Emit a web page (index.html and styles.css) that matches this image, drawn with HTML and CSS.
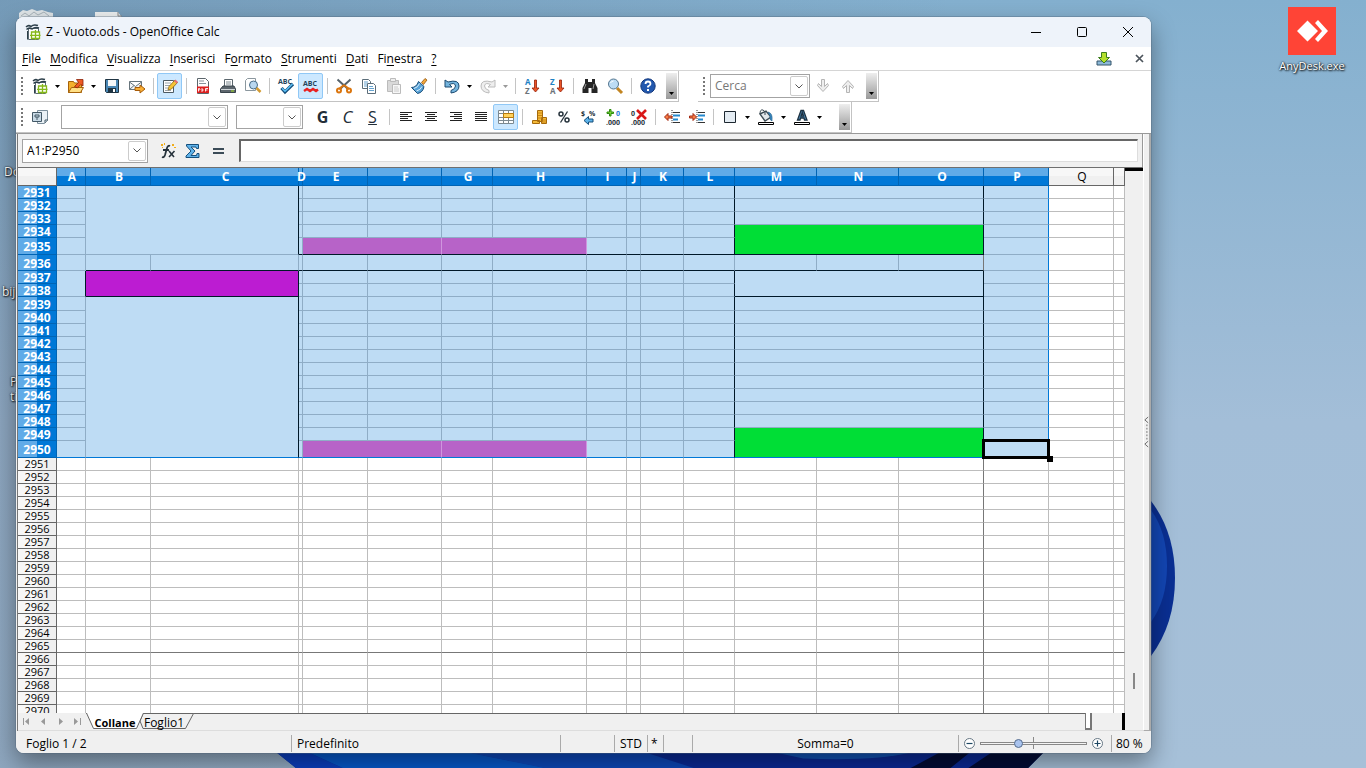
FILE: index.html
```html
<!DOCTYPE html>
<html lang="it">
<head>
<meta charset="utf-8">
<title>Z - Vuoto.ods - OpenOffice Calc</title>
<link rel="stylesheet" href="styles.css">
</head>
<body>
<svg class="defs" aria-hidden="true">
  <symbol id="calc" viewBox="0 0 16 16"><path d="M3.500 4.500h10v11h-10z" fill="#fff" stroke="#5a6a74"/><path d="M1 3q2.500-2.500 5-.5Q8.500 0 13 1.500M1.500 5.500Q4 3 7 5q3-2.500 7-1" fill="none" stroke="#2c3e49" stroke-width="1.500"/><path d="M2.500 7v8.500" stroke="#2c3e49"/><path d="M6.500 8h8v6.500h-8z" fill="#fdfff2" stroke="#86b81a" stroke-width="1.300"/><path d="M10.500 6v10M5 11.300h10.500" stroke="#86b81a" stroke-width="1.300"/></symbol>
  <symbol id="caret" viewBox="0 0 5 3"><path d="M0 0h5L2.500 3z"/></symbol>
  <symbol id="chev" viewBox="0 0 8 5"><path d="M.5.500L4 4 7.500.500" fill="none" stroke="#555"/></symbol>
</svg>
<main class="desktop">
  <svg class="bloom bloom-side" viewBox="0 0 30 160" aria-hidden="true"><path d="M0 3Q24 34 24 80T0 158z" fill="#0a2f93"/><path d="M0 12Q16 34 16 68T0 124z" fill="#1346b4"/></svg>
  <svg class="bloom bloom-base" viewBox="0 0 780 20" preserveAspectRatio="none" aria-hidden="true"><path d="M0 0h772l-16 20H20z" fill="#0a2a96"/><path d="M0 0h32l35 20H20z" fill="#0b3fc0"/><path d="M32 0h160l80 20H67z" fill="#0759cb"/><path d="M190 0h180l50 20H270z" fill="#0d48b9"/><path d="M500 0h140q-40 12-110 8z" fill="#1254b6"/><path d="M668 0h30l-20 20h-40zM720 0h52l-16 20h-60z" fill="#020c36"/></svg>
  <svg class="shortcut-top" viewBox="0 0 110 10" aria-hidden="true"><path d="M1 10V4l4-3 4 1 5-2 5 2 5-1 6 2 5 1v6z" fill="#dfe5e8"/><path d="M3 7l4-3 4 3 5-4 4 3 6-3 5 4" fill="none" stroke="#a9b4bb"/><path d="M77 10V3h23l5 7z" fill="#edf0f1"/><path d="M100 3v4h4" fill="none" stroke="#888"/></svg>
  <span class="desk-label label-a">Do</span><span class="desk-label label-b">bij</span><span class="desk-label label-c">P<br>ti</span>
  <a class="anydesk" href="#"><svg viewBox="0 0 48 48" aria-hidden="true"><path fill="#ff4436" d="M0 0h48v48H0z"/><path fill="#fff" d="M9 24l10.500-10.500L30 24 19.500 34.500zM27 16l3-3 10 11-10 11-3-3 7-8z"/></svg><span>AnyDesk.exe</span></a>

  <section class="window">
    <header class="title"><svg class="i"><use href="#calc"/></svg><h1>Z - Vuoto.ods - OpenOffice Calc</h1>
      <div class="controls">
        <button aria-label="Riduci"><svg viewBox="0 0 12 12"><path d="M1 6.500h10" stroke="#000"/></svg></button>
        <button aria-label="Ingrandisci"><svg viewBox="0 0 12 12"><rect x="1.500" y="1.500" width="9" height="9" rx="1" fill="none" stroke="#000"/></svg></button>
        <button aria-label="Chiudi"><svg viewBox="0 0 12 12"><path d="M1 1l10 10M11 1L1 11" stroke="#000"/></svg></button>
      </div>
    </header>
    <nav class="menu">
      <button><u>F</u>ile</button><button><u>M</u>odifica</button><button><u>V</u>isualizza</button><button><u>I</u>nserisci</button><button>F<u>o</u>rmato</button><button><u>S</u>trumenti</button><button><u>D</u>ati</button><button>Fi<u>n</u>estra</button><button><u>?</u></button>
      <div class="menu-end">
        <button aria-label="Aggiornamenti"><svg class="i" viewBox="0 0 16 16"><path d="M1 10h14v4H1z" fill="#8db9d8" stroke="#35556b"/><path d="M5.500 1.500h5v5h3L8 12 2.500 6.500h3z" fill="#b4e02c" stroke="#3c7d1c"/></svg></button>
        <button aria-label="Chiudi documento"><svg class="x" viewBox="0 0 9 9"><path d="M1 1l7 7M8 1L1 8" stroke="#4c545c" stroke-width="1.700"/></svg></button>
      </div>
    </nav>

    <div class="barrow">
    <div class="bar standard">
      <span class="grip"></span>
      <button class="tb" aria-label="Nuovo"><svg class="i"><use href="#calc"/></svg></button><button class="dd" aria-label="Tipi"><svg><use href="#caret"/></svg></button>
      <button class="tb" aria-label="Apri"><svg class="i" viewBox="0 0 16 16"><path d="M.5 14.500V3.500h5l1 1.500h7v9.500z" fill="#f3b02d" stroke="#a6620a"/><path d="M.5 14.500l3-5h12l-3 5z" fill="#ffdf85" stroke="#a6620a"/><path d="M6.500 8.500l4-4-2-3h6.500v6.500l-2.200-1.500-3.500 3.500z" fill="#ee5a24" stroke="#8c2208" stroke-width=".8"/></svg></button><button class="dd" aria-label="Recenti"><svg><use href="#caret"/></svg></button>
      <button class="tb" aria-label="Salva"><svg class="i" viewBox="0 0 16 16"><path d="M1.500 1.500h13v13h-12l-1-1z" fill="#4a87b5" stroke="#1f3442"/><path d="M4 2h8v6H4z" fill="#f6f8f9"/><path d="M4 10h8v4H4z" fill="#1f3442"/><path d="M9 11h2v3H9z" fill="#fff"/></svg></button>
      <button class="tb" aria-label="Documento come e-mail"><svg class="i" viewBox="0 0 16 16"><path d="M.5 3.500h12v8H.5zM.5 4l6 4.500L12.500 4M.5 11.500L5 7.500" fill="#f4f6f7" stroke="#67747c"/><path d="M6 9.500h5V7l5 4-5 4v-2.500H6z" fill="#f9af36" stroke="#a85c08"/></svg></button>
      <span class="sep"></span>
      <button class="tb on" aria-label="Modifica file"><svg class="i" viewBox="0 0 16 16"><path d="M1.500 2.500h10v12h-10z" fill="#fff" stroke="#4d5b64"/><path d="M3 5h6M3 7.500h5M3 10h3M3 12.500h6" stroke="#9aa4ab"/><path d="M6 12l1-3.500L13 2l2.500 2.500L9.500 11z" fill="#f5c436" stroke="#8a6412" stroke-width=".8"/><path d="M12 3l1.500-1.500L16 4l-1.500 1.500z" fill="#e76e74"/></svg></button>
      <span class="sep"></span>
      <button class="tb" aria-label="Esporta PDF"><svg class="i" viewBox="0 0 16 16"><path d="M2.500.500h8l3 3v12h-11z" fill="#fff" stroke="#5c666c"/><path d="M4 3h5M4 5.500h7" stroke="#87929a"/><path d="M2 8.500h12v6.500H2z" fill="#dc2020"/><path d="M3.500 13.500v-3h1q1 .8 0 1.500h-1M7 10.500v3q2.500-1.500 0-3M10.500 13.500v-3H13M10.500 12h2" fill="none" stroke="#fff" stroke-width=".9"/></svg></button>
      <button class="tb" aria-label="Stampa"><svg class="i" viewBox="0 0 16 16"><path d="M4.500 8V1.500h8V8" fill="#fff" stroke="#5b666d"/><path d="M6 4h5M6 6h5" stroke="#7c8990"/><path d="M3 8h11l1.500 3v3.500H.5V11z" fill="#5d666d" stroke="#39444c"/><path d="M1 11.500h14" stroke="#cfd5d8"/><path d="M11 13h3" stroke="#a3df22"/></svg></button>
      <button class="tb" aria-label="Anteprima"><svg class="i" viewBox="0 0 16 16"><path d="M.5 2.500l2-2h8v12H.5z" fill="#fff" stroke="#8b979e"/><circle cx="8.500" cy="7" r="4" fill="#b9d7ef" stroke="#476b85"/><path d="M11.500 10l4 4" stroke="#d39b32" stroke-width="2.500"/></svg></button>
      <span class="sep"></span>
      <button class="tb" aria-label="Ortografia"><svg class="i" viewBox="0 0 16 16"><text x="0" y="6" class="abc">ABC</text><path d="M3.500 10l3.500 4 8-8" fill="none" stroke="#164f7d" stroke-width="3.200"/><path d="M4 10.300l3 3 7.500-7.300" fill="none" stroke="#5cc0f5" stroke-width="1.500"/></svg></button>
      <button class="tb on" aria-label="Controllo automatico"><svg class="i" viewBox="0 0 16 16"><text x="0" y="8" class="abc">ABC</text><path d="M1 13l3-2 3 2 3-2 3 2 2-1.500" fill="none" stroke="#e92121" stroke-width="2.400"/></svg></button>
      <span class="sep"></span>
      <button class="tb" aria-label="Taglia"><svg class="i" viewBox="0 0 16 16"><path d="M1.500 1.500L12 11M14.500 1.500L4 11" stroke="#56636c" stroke-width="2"/><path d="M8 7L3 11M8 7l5 4" stroke="#db760f" stroke-width="2"/><circle cx="3" cy="12.500" r="2" fill="none" stroke="#db760f" stroke-width="2"/><circle cx="13" cy="12.500" r="2" fill="none" stroke="#db760f" stroke-width="2"/></svg></button>
      <button class="tb" aria-label="Copia"><svg class="i" viewBox="0 0 16 16"><path d="M1.500 1.500h6l2 2v7h-8z" fill="#fff" stroke="#5b6d79"/><path d="M3 4h4M3 6h3M3 8h3" stroke="#66a3cf"/><path d="M6.500 5.500h6l2 2v8h-8z" fill="#fff" stroke="#5b6d79"/><path d="M8 8.500h4M8 10.500h5M8 12.500h5" stroke="#66a3cf"/></svg></button>
      <button class="tb" aria-label="Incolla" disabled><svg class="i" viewBox="0 0 16 16"><path d="M1.500 2.500h11v11h-11z" fill="#d9d9d9" stroke="#bbb"/><path d="M4.500.500h5v3h-5z" fill="#eee" stroke="#bbb"/><path d="M6.500 6.500h8v9h-8z" fill="#f7f7f7" stroke="#bbb"/><path d="M8 9h4M8 11h5M8 13h5" stroke="#ccc"/></svg></button>
      <button class="tb" aria-label="Pennello formato"><svg class="i" viewBox="0 0 16 16"><path d="M10.500 4.500L14 .5 16 2l-3.500 4.500z" fill="#f3a83b" stroke="#94570e" stroke-width=".8"/><path d="M7.500 3.500l5.500 5q-1 6-6.500 7L.5 9.500q5 0 7-6z" fill="#59a3d8" stroke="#184e79"/><path d="M3 10.500q4-1 5.500-5M5.500 13q4-1 5.500-4.500" stroke="#d9effd" fill="none"/></svg></button>
      <span class="sep"></span>
      <button class="tb" aria-label="Annulla"><svg class="i" viewBox="0 0 16 16"><path d="M1 2v7h7L5.500 6.500Q11 4 11.500 8 11.500 11 7 12.500V15q8-1 8-7 0-7-11-4z" fill="#75b5de" stroke="#1c4a70"/></svg></button><button class="dd" aria-label="Elenco annulla"><svg><use href="#caret"/></svg></button>
      <button class="tb" aria-label="Ripristina" disabled><svg class="i" viewBox="0 0 16 16"><path d="M15 2v7H8l2.500-2.500Q5 4 4.500 8 4.500 11 9 12.500V15Q1 14 1 8q0-7 11-4z" fill="#eee" stroke="#bcbcbc"/></svg></button><button class="dd off" aria-label="Elenco ripristina" disabled><svg><use href="#caret"/></svg></button>
      <span class="sep"></span>
      <button class="tb" aria-label="Ordine crescente"><svg class="i" viewBox="0 0 16 16"><text x="1" y="7" class="az b">A</text><text x="1" y="16" class="az">Z</text><path d="M10.500 2h2v8H15l-3.500 4L8 10h2.500z" fill="#eb5526" stroke="#941f09" stroke-width=".8"/></svg></button>
      <button class="tb" aria-label="Ordine decrescente"><svg class="i" viewBox="0 0 16 16"><text x="1" y="7" class="az b">Z</text><text x="1" y="16" class="az">A</text><path d="M10.500 2h2v8H15l-3.500 4L8 10h2.500z" fill="#eb5526" stroke="#941f09" stroke-width=".8"/></svg></button>
      <span class="sep"></span>
      <button class="tb" aria-label="Trova e sostituisci"><svg class="i" viewBox="0 0 16 16"><path d="M3 1h3v3h4V1h3v4l2.500 5v5h-6v-5h-3v5h-6v-5L3 5z" fill="#252525"/><path d="M4 6l-2 5M12 6l-1 5" stroke="#999"/></svg></button>
      <button class="tb" aria-label="Zoom"><svg class="i" viewBox="0 0 16 16"><path d="M10 10l5 5" stroke="#c28521" stroke-width="3"/><circle cx="6.500" cy="6" r="5" fill="#bcdcf5" stroke="#53758e"/><path d="M3.500 5q1-2 3-2" stroke="#fff" fill="none"/></svg></button>
      <span class="sep"></span>
      <button class="tb" aria-label="Guida"><svg class="i" viewBox="0 0 16 16"><circle cx="8" cy="8" r="7.200" fill="#2258ae" stroke="#12377c"/><path d="M5.500 6q0-2.500 2.500-2.500T10.500 6Q10.500 7 8 8.500v1" fill="none" stroke="#fff" stroke-width="1.800"/><path d="M7 11h2v2H7z" fill="#fff"/></svg></button>
      <button class="more" aria-label="Altro"><svg><use href="#caret"/></svg></button>
    </div>
    <div class="bar search">
      <span class="grip"></span>
      <label class="combo w-find"><input placeholder="Cerca" aria-label="Cerca"><span class="arrow"><svg><use href="#chev"/></svg></span></label>
      <button class="tb" aria-label="Successivo" disabled><svg class="i" viewBox="0 0 16 16"><path d="M6.500 1.500h3v7l3-3 1 2L8 13.500 2.500 7.500l1-2 3 3z" fill="#eee" stroke="#b5b5b5"/></svg></button>
      <button class="tb" aria-label="Precedente" disabled><svg class="i" viewBox="0 0 16 16"><path d="M6.500 14.500h3v-7l3 3 1-2L8 2.500 2.500 8.500l1 2 3-3z" fill="#eee" stroke="#b5b5b5"/></svg></button>
      <button class="more" aria-label="Altro"><svg><use href="#caret"/></svg></button>
    </div>
    </div>

    <div class="barrow">
    <div class="bar format">
      <span class="grip"></span>
      <button class="tb" aria-label="Stili"><svg class="i" viewBox="0 0 16 16"><path d="M5.500 1.500h10v10l-3 3h-7z" fill="#eaf1f6" stroke="#7c8f9c"/><path d="M.5 3.500h9v9h-9z" fill="#c9dae6" stroke="#435866"/><path d="M3 6h4v2H3zM5 8v3M13 14v-3h3" fill="none" stroke="#435866"/></svg></button>
      <label class="combo w-font"><input aria-label="Nome carattere"><span class="arrow"><svg><use href="#chev"/></svg></span></label>
      <label class="combo w-size"><input aria-label="Dimensione carattere"><span class="arrow"><svg><use href="#chev"/></svg></span></label>
      <button class="tb txt"><b>G</b></button><button class="tb txt"><i>C</i></button><button class="tb txt"><u>S</u></button>
      <span class="sep"></span>
      <button class="tb" aria-label="Sinistra"><svg class="i" viewBox="0 0 16 16"><path d="M2 3.500h12M2 5.500h8M2 7.500h12M2 9.500h8M2 11.500h12" stroke="#222"/></svg></button>
      <button class="tb" aria-label="Centrato"><svg class="i" viewBox="0 0 16 16"><path d="M2 3.500h12M4 5.500h8M2 7.500h12M4 9.500h8M2 11.500h12" stroke="#222"/></svg></button>
      <button class="tb" aria-label="Destra"><svg class="i" viewBox="0 0 16 16"><path d="M2 3.500h12M6 5.500h8M2 7.500h12M6 9.500h8M2 11.500h12" stroke="#222"/></svg></button>
      <button class="tb" aria-label="Giustificato"><svg class="i" viewBox="0 0 16 16"><path d="M2 3.500h12M2 5.500h12M2 7.500h12M2 9.500h12M2 11.500h12" stroke="#222"/></svg></button>
      <button class="tb on" aria-label="Unisci celle"><svg class="i" viewBox="0 0 16 16"><path d="M.5 1.500h15v13H.5zM.5 4.500h15M.5 8.500h15M.5 11.500h15M5.500 1.500v13M10.500 1.500v13" fill="#fff" stroke="#7c8990"/><path d="M5.500 4.500h10v4h-10z" fill="#ffd25c" stroke="#b97a0d"/></svg></button>
      <span class="sep"></span>
      <button class="tb" aria-label="Valuta"><svg class="i" viewBox="0 0 16 16"><path d="M6.500 1.500h5v11h-5zM10.500 8.500h5v6h-5zM1.500 11.500h7v3h-7z" fill="#f5bb38" stroke="#a66a0c"/><path d="M7 4h4M7 6.500h4M7 9h4M11 11h4M11 13h4" stroke="#c88416"/></svg></button>
      <button class="tb" aria-label="Percentuale"><svg class="i" viewBox="0 0 16 16"><circle cx="5" cy="5" r="2" fill="none" stroke="#26323b" stroke-width="1.500"/><circle cx="11" cy="11" r="2" fill="none" stroke="#26323b" stroke-width="1.500"/><path d="M11.500 2.500l-7 11" stroke="#26323b" stroke-width="1.300"/></svg></button>
      <button class="tb" aria-label="Standard"><svg class="i" viewBox="0 0 16 16"><text x="0" y="7" class="num">$</text><text x="8" y="7" class="num">%</text><path d="M3 11.500L7.500 7.500v2.500H12v3H7.500v2.500z" fill="#5cb3ea" stroke="#154d78"/></svg></button>
      <button class="tb" aria-label="Aggiungi decimale"><svg class="i" viewBox="0 0 16 16"><path d="M3.500.500h1.500v2.500h2.500v1.500H5v2.500H3.500V4.500H1V3h2.500z" fill="#7fd83a" stroke="#2d8a0d"/><text x="10" y="7" class="num blue">0</text><text x="0" y="16" class="num">.000</text></svg></button>
      <button class="tb" aria-label="Elimina decimale"><svg class="i" viewBox="0 0 16 16"><text x="0" y="7" class="num">0</text><text x="0" y="16" class="num">.000</text><path d="M6 1l9 9M15 1l-9 9" stroke="#d91818" stroke-width="2.600"/></svg></button>
      <span class="sep"></span>
      <button class="tb" aria-label="Riduci rientro"><svg class="i" viewBox="0 0 16 16"><path d="M8 1v14" stroke="#333" stroke-dasharray="1 1"/><path d="M9 3.500h7M9 13.500h7" stroke="#333"/><path d="M9 6.500h7M9 10.500h5" stroke="#248acf" stroke-width="2"/><path d="M.5 8L4 4.500V7h4v2H4v2.500z" fill="#f67c45" stroke="#a32811"/></svg></button>
      <button class="tb" aria-label="Aumenta rientro"><svg class="i" viewBox="0 0 16 16"><path d="M8 1v14" stroke="#333" stroke-dasharray="1 1"/><path d="M9 3.500h7M9 13.500h7" stroke="#333"/><path d="M9 6.500h7M9 10.500h5" stroke="#248acf" stroke-width="2"/><path d="M7.500 8L4 4.500V7H.5v2H4v2.500z" fill="#f67c45" stroke="#a32811"/></svg></button>
      <span class="sep"></span>
      <button class="tb" aria-label="Bordo"><svg class="i" viewBox="0 0 16 16"><path d="M2.500 2.500h11v11h-11z" fill="#e4ecf3" stroke="#1d2730"/></svg></button><button class="dd" aria-label="Scelta bordo"><svg><use href="#caret"/></svg></button>
      <button class="tb" aria-label="Sfondo"><svg class="i" viewBox="0 0 16 16"><path d="M2 5l6-3 5 6-6 4z" fill="#e2e7eb" stroke="#3d4b55" stroke-width="1.400"/><path d="M2 5q0-5 3-4t2 5" fill="none" stroke="#3d4b55"/><path d="M10 3q5 1 4 9-3-1-2-5z" fill="#3a8bc4" stroke="#215a84" stroke-width=".6"/><path d="M.5 13.500h15v2H.5z" fill="#fff" stroke="#000"/></svg></button><button class="dd" aria-label="Scelta sfondo"><svg><use href="#caret"/></svg></button>
      <button class="tb" aria-label="Colore carattere"><svg class="i" viewBox="0 0 16 16"><path d="M3.500 11L7 1.500h2.500L13 11h-2.500L10 9H6.500L6 11zM7 7h2.500L8.300 3.500z" fill="#4d88b4" stroke="#1d3242" stroke-width="1.300"/><path d="M.5 13.500h15v2H.5z" fill="#fff" stroke="#000"/></svg></button><button class="dd" aria-label="Scelta colore"><svg><use href="#caret"/></svg></button>
      <button class="more" aria-label="Altro"><svg><use href="#caret"/></svg></button>
    </div>
    </div>

    <div class="work">
      <div class="doc">
        <div class="formula">
          <label class="combo w-name"><input value="A1:P2950" aria-label="Area del foglio"><span class="arrow"><svg><use href="#chev"/></svg></span></label>
          <button class="tb" aria-label="Funzione"><svg class="i" viewBox="0 0 16 16"><path d="M2 14q2 1 3-2l2-7q1-3 3-2M3 7h6" fill="none" stroke="#26323b" stroke-width="1.800"/><path d="M9 8l5 6M14.500 8L9 14" stroke="#26323b" stroke-width="1.600"/><path d="M1 1h2v2H1zM4 0h1v2H4zM12 1h2v2h-2zM14 4h2v1h-2zM2 4h1v1H2z" fill="#f0ad1c"/></svg></button>
          <button class="tb" aria-label="Somma"><svg class="i" viewBox="0 0 16 16"><path d="M1.500 1.500h12v4h-2L11 4H6l4 4-4 4.500h5.500l.5-2h2v4h-13V13L6 8 1.500 3z" fill="#5fb2e9" stroke="#144e7c"/></svg></button>
          <button class="tb" aria-label="Accetta"><svg class="i" viewBox="0 0 16 16"><path d="M3 6h11M3 10h11" stroke="#3b4b57" stroke-width="1.800"/></svg></button>
          <input class="entry" aria-label="Riga di immissione">
        </div>
        <div class="sheet">
          <div class="viewport"><table class="grid" id="grid"></table></div>
          <div class="vscroll"><span class="split-top"></span><span class="vthumb"></span></div>
        </div>
        <div class="tabs">
          <div class="tabnav">
            <button aria-label="Primo foglio"><svg viewBox="0 0 9 9"><path d="M1 1h1v7H1zM7 1v7L3 4.500z"/></svg></button>
            <button aria-label="Foglio precedente"><svg viewBox="0 0 9 9"><path d="M6 1v7L2 4.500z"/></svg></button>
            <button aria-label="Foglio successivo"><svg viewBox="0 0 9 9"><path d="M3 1v7l4-3.500z"/></svg></button>
            <button aria-label="Ultimo foglio"><svg viewBox="0 0 9 9"><path d="M1 1v7l4-3.500zM7 1h1v7H7z"/></svg></button>
          </div>
          <div class="tabline">
            <button class="tab current"><svg viewBox="0 0 58 17" preserveAspectRatio="none"><path d="M.5 0l7 15.500h43L57.500 0" fill="#fff" stroke="#666"/></svg><b>Collane</b></button><button class="tab"><svg viewBox="0 0 56 17" preserveAspectRatio="none"><path d="M5 .500h50.500L47.500 15.500H5L2 8z" fill="#f0f0f0" stroke="#666"/></svg><span>Foglio1</span></button>
          </div>
          <span class="hsplit"></span><span class="hscroll"></span><span class="hend"></span><span class="corner"></span>
        </div>
      </div>
      <div class="sidebar"><button aria-label="Mostra barra laterale"><svg viewBox="0 0 6 38"><path d="M5 1L1 4.500 5 8M5 30L1 33.500 5 37" fill="none" stroke="#555"/><path d="M3.500 10v18" stroke="#555" stroke-dasharray="2 2"/></svg></button></div>
    </div>
    <footer class="status">
      <span class="s-sheet">Foglio 1 / 2</span><span class="s-style">Predefinito</span><span class="s-ins"></span><span class="s-mode">STD</span><span class="s-mod">*</span><span class="s-sign"></span><span class="s-sum">Somma=0</span>
      <div class="s-zoom"><button aria-label="Riduci zoom"><svg viewBox="0 0 11 11"><circle cx="5.500" cy="5.500" r="5" fill="#fff" stroke="#667784"/><path d="M2.500 5.500h6" stroke="#1d4763" stroke-width="1.200"/></svg></button><input type="range" min="0" max="100" value="34" aria-label="Zoom"><button aria-label="Aumenta zoom"><svg viewBox="0 0 11 11"><circle cx="5.500" cy="5.500" r="5" fill="#fff" stroke="#667784"/><path d="M2.500 5.500h6M5.500 2.500v6" stroke="#1d4763" stroke-width="1.200"/></svg></button></div>
      <span class="s-pct">80 %</span>
    </footer>
  </section>
</main>
<script src="grid.js"></script>
</body>
</html>
```
FILE: grid.js
```js
const widths = [39, 29, 65, 148, 4, 65, 74, 51, 94, 40, 14, 43, 51, 82, 82, 85, 65, 65, 11];
const letters = 'ABCDEFGHIJKLMNOPQ'.split('').concat('');
const heights = { 2935: 17, 2936: 16, 2939: 14, 2950: 17 };
const FIRST = 2931, LAST = 2970, SEL_END = 2950;

// Merged areas: [column, first row, columns, rows, class]
const merges = [
  ['B', 2931, 2, 5, ''], ['A', 2937, 1, 2, ''], ['B', 2937, 2, 2, 'magenta'], ['B', 2939, 2, 12, ''],
  ['M', 2934, 3, 2, 'green'], ['M', 2937, 3, 2, ''], ['M', 2949, 3, 2, 'green'],
  ['E', 2935, 2, 1, 'pink'], ['G', 2935, 2, 1, 'pink'], ['E', 2950, 2, 1, 'pink'], ['G', 2950, 2, 1, 'pink']
];
for (let r = 2931; r <= 2948; r++) {
  if (r < 2934 || r > 2938) merges.push(['M', r, 3, 1, '']);
}

const grid = document.getElementById('grid');
const cols = document.createElement('colgroup');
widths.forEach(w => {
  const col = document.createElement('col');
  col.style.width = w + 'px';
  cols.append(col);
});
grid.append(cols);

function headCell(text, selected, scope) {
  const th = document.createElement('th');
  th.scope = scope;
  const span = document.createElement('span');
  span.textContent = text;
  th.append(span);
  if (selected) th.classList.add('sel');
  return th;
}

const head = grid.createTHead().insertRow();
head.append(headCell('', false, 'col'));
letters.forEach((l, i) => head.append(headCell(l, i < 16, 'col')));

const body = grid.createTBody();
const covered = new Set();
for (let r = FIRST; r <= LAST; r++) {
  const row = body.insertRow();
  row.style.height = (heights[r] || 13) + 'px';
  row.append(headCell(r, r <= SEL_END, 'row'));
  letters.forEach((l, c) => {
    if (covered.has(r + ':' + c)) return;
    const td = row.insertCell();
    const merge = merges.find(m => m[0] === l && m[1] === r);
    let endCol = c, endRow = r;
    if (merge) {
      td.colSpan = merge[2];
      td.rowSpan = merge[3];
      if (merge[4]) td.classList.add(merge[4]);
      endCol = c + merge[2] - 1;
      endRow = r + merge[3] - 1;
      for (let y = r; y <= endRow; y++) for (let x = c; x <= endCol; x++) covered.add(y + ':' + x);
    }
    if (r <= SEL_END && c < 16) td.classList.add('sel');
    const inBlock = r <= SEL_END && r !== 2936;
    if (inBlock && [2, 11, 14].includes(endCol)) td.classList.add('ink-right');
    if (r === 2937 && c === 0) td.classList.add('ink-right');
    if (endRow === 2935 && c >= 3 && c < 15) td.classList.add('ink-bottom');
    if (r === 2936 && c >= 1 && c < 15) td.classList.add('ink-bottom');
    if (endRow === 2938 && (c === 1 || c === 12)) td.classList.add('ink-bottom');
    if (endRow === SEL_END && c < 16) td.classList.add('edge-bottom');
    if (c === 15 && r <= SEL_END) td.classList.add('edge-right');
    if (!inBlock && c === 14) td.classList.add('break-right');
    if (r === 2965) td.classList.add('break-bottom');
    if (r === SEL_END && c === 15) td.classList.add('active');
  });
}
```
FILE: styles.css
```css
* { box-sizing: border-box; }
body { margin: 0; font: 12px/16px "Open Sans", "Noto Sans", sans-serif; color: #000; }
button { border: 0; padding: 0; background: none; font: inherit; color: inherit; }
input { font: inherit; }
.defs { position: absolute; width: 0; height: 0; }
.desktop { position: relative; height: 100vh; overflow: hidden; background: linear-gradient(90deg, rgba(70, 90, 115, .25), rgba(70, 90, 115, 0) 70%), linear-gradient(#84b0cf, #a3bed8 55%, #a6c0d8); }
.bloom { position: absolute; }
.bloom-side { right: 185px; bottom: 110px; width: 30px; height: 160px; }
.bloom-base { left: 276px; bottom: 0; width: 776px; height: 16px; }
.shortcut-top { position: absolute; left: 18px; top: 9px; width: 110px; height: 10px; }
.desk-label { position: absolute; color: #fff; line-height: 15px; text-shadow: 1px 1px 2px #000, 0 0 2px #000; }
.label-a { left: 4px; top: 164px; }
.label-b { left: 2px; top: 284px; }
.label-c { left: 10px; top: 374px; }
.anydesk { position: absolute; right: 14px; top: 7px; width: 80px; display: flex; flex-direction: column; align-items: center; gap: 3px; color: #fff; font-size: 11px; text-decoration: none; text-shadow: 1px 1px 2px #000, 0 0 2px #000; }
.anydesk svg { width: 48px; height: 48px; }

.window { position: absolute; inset: 17px 215px 15px 16px; display: flex; flex-direction: column; background: #fff; border-radius: 8px; overflow: hidden; box-shadow: 0 0 0 1px rgba(80, 100, 120, .35), 0 10px 24px rgba(0, 0, 0, .4); }
.i { width: 16px; height: 16px; display: block; overflow: visible; }
.title { flex: none; display: flex; align-items: center; height: 30px; padding-left: 9px; gap: 5px; background: #eef3fa; }
.title h1 { margin: 0; flex: 1; font-size: 12px; font-weight: 400; }
.controls { display: flex; }
.controls button { width: 46px; height: 30px; display: grid; place-items: center; }
.controls svg { width: 12px; height: 12px; }
.menu { flex: none; display: flex; align-items: center; height: 24px; padding: 0 7px 0 6px; gap: 9px; border-bottom: 1px solid #d5d5d5; }
.menu u { text-underline-offset: 2px; }
.menu-end { margin-left: auto; display: flex; align-items: center; gap: 23px; }
.menu-end .x { width: 9px; height: 9px; display: block; }

.barrow { flex: none; display: flex; gap: 19px; height: 31px; }
.bar { display: flex; align-items: center; padding-left: 5px; border: solid #c3c3c3; border-width: 0 1px 1px 0; }
.grip { flex: none; width: 2px; height: 18px; margin-right: 4px; background: repeating-linear-gradient(#777 0 2px, transparent 2px 4px); }
.tb { flex: none; width: 25px; height: 26px; display: grid; place-items: center; }
.tb.on { background: #cce8ff; border: 1px solid #90c8f6; border-radius: 2px; }
.dd { flex: none; width: 11px; height: 26px; display: grid; place-items: center; }
.dd svg, .more svg { width: 5px; height: 3px; display: block; }
.dd.off { color: #999; fill: #999; }
.sep { flex: none; width: 8px; height: 16px; background: linear-gradient(#c4c4c4, #c4c4c4) center / 1px 100% no-repeat; }
.more { width: 11px; height: 26px; margin: 0 1px 0 6px; padding-bottom: 4px; display: grid; place-items: end center; background: linear-gradient(#eee, #999); }
.search .grip { margin-right: 5px; }
.format .more { margin-left: 14px; }
.abc { font: bold 7px "Open Sans", sans-serif; fill: #24435b; }
.az { font: bold 8px "Open Sans", sans-serif; fill: #6c737a; }
.az.b { fill: #1d81c4; }
.num { font: bold 7px "Open Sans", sans-serif; fill: #26323b; }
.num.blue { fill: #2476da; }
.txt { font-size: 16px; color: #222d38; }
.txt i { font-size: 17px; }
.combo { display: flex; height: 24px; padding: 1px; border: 1px solid #a3a3a3; background: #fff; }
.combo input { flex: 1; min-width: 0; border: 0; padding: 0 3px; background: none; outline: 0; }
.combo input::placeholder { color: #777; }
.arrow { flex: none; width: 18px; display: grid; place-items: center; border: 1px solid #ccc; border-radius: 2px; }
.arrow svg { width: 8px; height: 5px; }
.w-find { width: 100px; }
.w-font { width: 167px; margin: 0 8px 0 9px; }
.w-size { width: 67px; margin-right: 7px; }
.w-name { width: 126px; margin-right: 7px; }

.work { flex: 1; min-height: 0; display: flex; background: #f0f0f0; border-top: 1px solid #999; }
.doc { flex: 1; min-width: 0; display: flex; flex-direction: column; border-left: 1px solid #777; margin-left: 1px; }
.formula { flex: none; display: flex; align-items: center; height: 33px; padding: 0 4px; border-right: 1px solid #999; }
.entry { flex: 1; min-width: 0; height: 23px; margin-left: 9px; border: solid #ddd; border-width: 2px 1px 1px 2px; border-top-color: #666; border-left-color: #666; background: #fff; outline: 0; }
.sheet { flex: 1; min-height: 0; display: flex; border-top: 1px solid #6f6f6f; }
.viewport { flex: 1; min-width: 0; overflow: hidden; background: #fff; }
.vscroll { flex: none; width: 18px; display: flex; flex-direction: column; align-items: center; }
.split-top { width: 100%; height: 3px; background: #000; }
.vthumb { width: 2px; height: 16px; margin: auto 0 24px; background: #888; }
.grid { table-layout: fixed; width: 1107px; border-collapse: separate; border-spacing: 0; }
.grid th, .grid td { padding: 0; border: solid #bdbdbd; border-width: 0 1px 1px 0; }
.grid th { font-size: 12px; line-height: 12px; font-weight: 400; border-color: #666; white-space: nowrap; }
.grid thead tr { height: 18px; }
.grid thead th { background: linear-gradient(#f7f7f7 50%, #f0f0f0 50%); padding-left: 2px; }
.grid thead span { display: inline-block; margin: 0 -6px; line-height: 16px; vertical-align: top; }
.grid tbody th { font-size: 11px; background: linear-gradient(90deg, #f7f7f7 50%, #f0f0f0 50%); }
.grid tbody th span { display: block; height: 12px; }
.grid th.sel { color: #fff; font-size: 12px; font-weight: 700; border-color: #0064b4; }
.grid tbody th.sel span { line-height: 14px; }
.grid thead th.sel { background: linear-gradient(#60abe8 50%, #0078d7 50%); }
.grid tbody th.sel { background: linear-gradient(90deg, #60abe8 50%, #0078d7 50%); }
.grid td.sel { background: #bedcf4; border-color: #8fadc6; }
.grid td.magenta { background: #bc1cd2; }
.grid td.pink { background: #b763c8; border-right-color: #cf96de; }
.grid td.green { background: #00de36; }
.grid td.break-right { border-right-color: #777; }
.grid td.break-bottom { border-bottom-color: #777; }
.grid td.ink-right { border-right-color: #001828; }
.grid td.ink-bottom { border-bottom-color: #001828; }
.grid td.edge-bottom { border-bottom-color: #0078d7; }
.grid td.edge-right { border-right-color: #0078d7; }
.active { position: relative; }
.active::before { content: ""; position: absolute; inset: -2px; border: 3px solid #000; }
.active::after { content: ""; position: absolute; right: -5px; bottom: -5px; width: 6px; height: 6px; background: #000; }

.tabs { flex: none; display: flex; height: 18px; border-bottom: 1px solid #ddd; }
.tabnav { flex: none; display: flex; width: 68px; }
.tabnav button { width: 17px; display: grid; place-items: center; }
.tabnav svg { width: 9px; height: 9px; fill: #999; }
.tabline { flex: 1; display: flex; border-top: 1px solid #666; }
.tab { position: relative; width: 52px; height: 17px; line-height: 16px; }
.tab svg { position: absolute; top: -1px; left: 0; width: 56px; height: 17px; }
.tab b, .tab span { position: relative; display: block; text-align: center; }
.tab.current { z-index: 1; }
.tab.current svg { width: 58px; }
.tab b { padding-left: 6px; font-size: 11px; }
.tab span { font-size: 12px; }
.hsplit { width: 7px; border: 2px solid #777; border-top: 0; border-left-width: 1px; background: #fff; }
.hscroll { width: 30px; }
.hend { width: 3px; background: #000; }
.corner { width: 18px; }
.sidebar { flex: none; width: 8px; display: flex; align-items: center; border: solid #aaa; border-width: 0 2px 1px 1px; border-left-color: #fff; }
.sidebar button { width: 5px; height: 38px; }
.sidebar svg { width: 5px; height: 38px; display: block; }

.status { flex: none; display: flex; align-items: center; height: 22px; padding: 2px 5px 0 10px; background: #f0f0f0; }
.status > * { height: 17px; line-height: 17px; border-left: 1px solid #aaa; padding-left: 5px; }
.status .s-sheet { width: 265px; border: 0; padding: 0; }
.s-style { width: 269px; }
.s-ins { width: 54px; }
.s-mode { width: 33px; }
.status .s-mod { width: 16px; padding-left: 3px; }
.s-sign { width: 29px; }
.status .s-sum { flex: 1; padding: 0; text-align: center; }
.status .s-zoom { width: 153px; display: flex; align-items: center; gap: 5px; padding-right: 8px; }
.s-zoom button { width: 11px; height: 11px; }
.s-zoom svg { width: 11px; height: 11px; display: block; }
.s-zoom input { flex: 1; min-width: 0; margin: 0; height: 12px; appearance: none; background: linear-gradient(#888, #888) 50% 0 / 1px 12px no-repeat; }
.s-zoom input::-webkit-slider-runnable-track { height: 3px; border: 1px solid #888; background: #f4f4f4; }
.s-zoom input::-webkit-slider-thumb { appearance: none; width: 9px; height: 9px; margin-top: -4px; border: 1px solid #566d8d; border-radius: 50%; background: #a9c3ee; }
.status .s-pct { width: 35px; padding-left: 4px; white-space: nowrap; }
```
